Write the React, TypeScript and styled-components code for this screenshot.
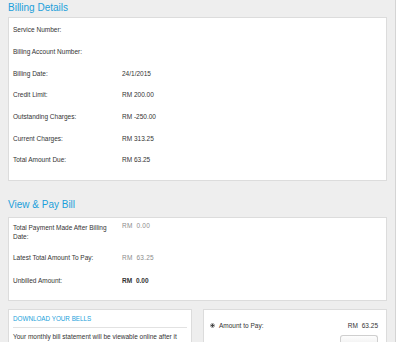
import styled, { createGlobalStyle } from "styled-components";

const GlobalStyle = createGlobalStyle`
  html, body {
    margin: 0;
    padding: 0;
    background: #ffffff;
  }
  body {
    font-family: "Liberation Sans", Arial, sans-serif;
  }
`;

const Page = styled.div`
  box-sizing: border-box;
  width: 396px;
  height: 342px;
  padding: 0 8px;
  background: #eeeeee;
  border-right: 1px solid #d4d4d4;
  overflow: hidden;
`;

const SectionTitle = styled.h2<{ $top?: number; $bottom?: number }>`
  margin: ${(p) => p.$top ?? 0}px 0 ${(p) => p.$bottom ?? 2}px;
  font-size: 10px;
  line-height: 15px;
  font-weight: normal;
  color: #1b9fdb;
`;

const Card = styled.div<{ $padTop: number; $padBottom: number }>`
  box-sizing: border-box;
  background: #ffffff;
  border: 1px solid #dcdcdc;
  padding: ${(p) => p.$padTop}px 4px ${(p) => p.$padBottom}px;
`;

const Row = styled.div<{ $h: number }>`
  display: grid;
  grid-template-columns: 109px 1fr;
  align-items: center;
  min-height: ${(p) => p.$h}px;
  font-size: 6.5px;
  line-height: 9px;
  color: #333333;
`;

const Label = styled.div`
  padding-right: 6px;
`;

const Value = styled.div<{ $muted?: boolean; $bold?: boolean; $top?: boolean }>`
  color: ${(p) => (p.$muted ? "#8c8c8c" : "#333333")};
  font-weight: ${(p) => (p.$bold ? "bold" : "normal")};
  word-spacing: ${(p) => (p.$muted || p.$bold ? "2px" : "0")};
  letter-spacing: ${(p) => (p.$muted ? "0.2px" : "0")};
  align-self: ${(p) => (p.$top ? "start" : "center")};
  padding-top: ${(p) => (p.$top ? "3px" : "0")};
`;

const BottomRow = styled.div`
  display: grid;
  grid-template-columns: 184px 184px;
  column-gap: 11px;
  margin-top: 8px;
`;

const Panel = styled.div`
  box-sizing: border-box;
  background: #ffffff;
  border: 1px solid #dcdcdc;
  height: 60px;
  padding: 0 4px;
`;

const PanelHead = styled.div`
  font-size: 6.3px;
  line-height: 17px;
  color: #1b9fdb;
  border-bottom: 1px solid #e2e2e2;
`;

const PanelText = styled.p`
  margin: 4px 0 0;
  font-size: 6.5px;
  line-height: 10px;
  color: #333333;
  white-space: nowrap;
`;

const PayLine = styled.div`
  display: flex;
  align-items: center;
  padding: 11px 4px 0 2px;
  font-size: 6.5px;
  line-height: 9px;
  color: #333333;
`;

const Radio = styled.span`
  box-sizing: border-box;
  width: 5px;
  height: 5px;
  border-radius: 50%;
  border: 1px solid #9a9a9a;
  background: radial-gradient(circle, #444 0 1px, #eee 1.2px);
  margin-right: 4px;
`;

const PayLabel = styled.span`
  flex: 1;
`;

const PayAmount = styled.span`
  word-spacing: 2px;
`;

const PayButton = styled.div`
  width: 36px;
  height: 10px;
  margin: 5px 4px 0 auto;
  border: 1px solid #cfcfcf;
  border-bottom: none;
  border-radius: 3px 3px 0 0;
  background: linear-gradient(#fdfdfd, #eeeeee);
`;

const billing = [
  ["Service Number:", ""],
  ["Billing Account Number:", ""],
  ["Billing Date:", "24/1/2015"],
  ["Credit Limit:", "RM 200.00"],
  ["Outstanding Charges:", "RM -250.00"],
  ["Current Charges:", "RM 313.25"],
  ["Total Amount Due:", "RM 63.25"],
];

const App = () => {
  return (
    <>
      <GlobalStyle />
      <Page>
        <SectionTitle>Billing Details</SectionTitle>
        <Card $padTop={1} $padBottom={9}>
          {billing.map(([label, value]) => (
            <Row key={label} $h={21.7}>
              <Label>{label}</Label>
              <Value>{value}</Value>
            </Row>
          ))}
        </Card>

        <SectionTitle $top={16} $bottom={5}>
          View &amp; Pay Bill
        </SectionTitle>
        <Card $padTop={0} $padBottom={7.5}>
          <Row $h={28.5}>
            <Label>Total Payment Made After Billing Date:</Label>
            <Value $muted $top>
              RM 0.00
            </Value>
          </Row>
          <Row $h={23}>
            <Label>Latest Total Amount To Pay:</Label>
            <Value $muted>RM 63.25</Value>
          </Row>
          <Row $h={23}>
            <Label>Unbilled Amount:</Label>
            <Value $bold>RM 0.00</Value>
          </Row>
        </Card>

        <BottomRow>
          <Panel>
            <PanelHead>DOWNLOAD YOUR BELLS</PanelHead>
            <PanelText>
              Your monthly bill statement will be viewable online after it
            </PanelText>
          </Panel>
          <Panel>
            <PayLine>
              <Radio />
              <PayLabel>Amount to Pay:</PayLabel>
              <PayAmount>RM 63.25</PayAmount>
            </PayLine>
            <PayButton />
          </Panel>
        </BottomRow>
      </Page>
    </>
  );
};

export default App;
